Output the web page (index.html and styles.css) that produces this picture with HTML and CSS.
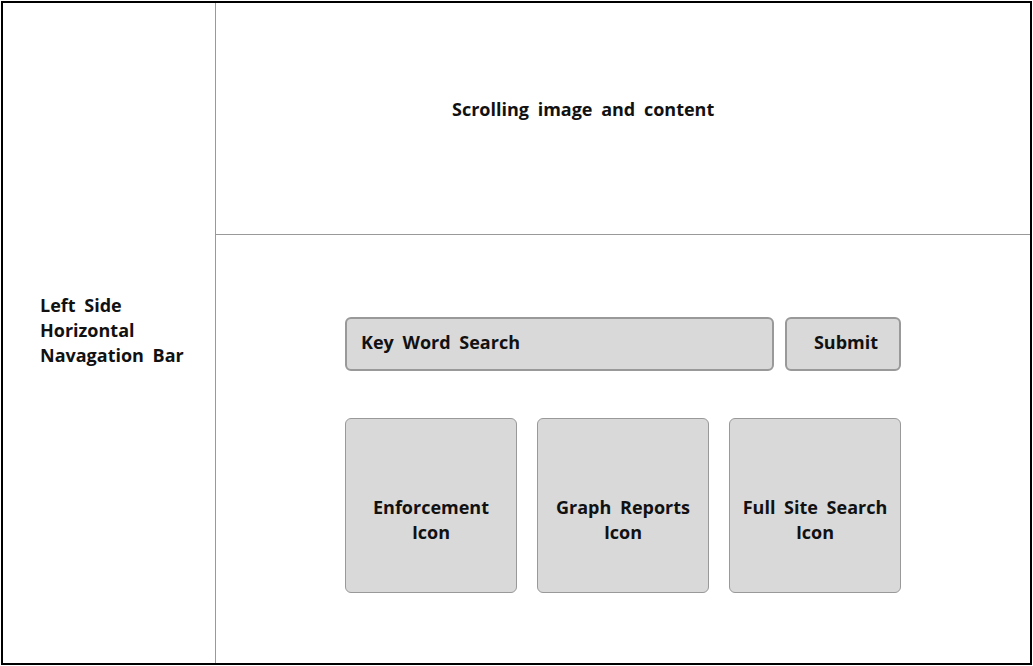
FILE: index.html
```html
<!DOCTYPE html>
<html>
<head>
<meta charset="utf-8">
<link rel="stylesheet" href="styles.css">
</head>
<body>
<div class="frame">
  <aside class="sidenav">
    <div class="sidenav-label">Left Side<br>Horizontal<br>Navagation Bar</div>
  </aside>
  <main class="main">
    <section class="hero">
      <div class="hero-label">Scrolling image and content</div>
    </section>
    <section class="content">
      <div class="search-row">
        <div class="search-box">Key Word Search</div>
        <div class="submit-btn">Submit</div>
      </div>
      <div class="tiles">
        <div class="tile">Enforcement<br>Icon</div>
        <div class="tile">Graph Reports<br>Icon</div>
        <div class="tile">Full Site Search<br>Icon</div>
      </div>
    </section>
  </main>
</div>
</body>
</html>
```

FILE: styles.css
```css
* { box-sizing: border-box; }
html, body {
  margin: 0;
  padding: 0;
  background: #fff;
}
body {
  font-family: "Open Sans", "Noto Sans", sans-serif;
  font-weight: 700;
  font-size: 18px;
  line-height: 25px;
  color: #111;
  word-spacing: 4px;
}
.frame {
  margin: 1px;
  width: 1031px;
  height: 664px;
  border: 2px solid #000;
  display: flex;
}
.sidenav {
  width: 213px;
  flex: none;
  border-right: 1px solid #999;
  display: flex;
  align-items: center;
  padding-left: 37px;
  padding-bottom: 6px;
}
.main {
  flex: 1;
  display: flex;
  flex-direction: column;
}
.hero {
  height: 232px;
  flex: none;
  border-bottom: 1px solid #999;
  padding-top: 94px;
  padding-left: 236px;
}
.content {
  flex: 1;
  padding-top: 82px;
  padding-left: 129px;
}
.search-row {
  display: flex;
  gap: 11px;
}
.search-box {
  width: 429px;
  height: 54px;
  background: #d9d9d9;
  border: 2px solid #999;
  border-radius: 6px;
  display: flex;
  align-items: center;
  padding-left: 14px;
  padding-bottom: 4px;
}
.submit-btn {
  width: 116px;
  height: 54px;
  background: #d9d9d9;
  border: 2px solid #999;
  border-radius: 6px;
  display: flex;
  align-items: center;
  justify-content: center;
  padding-bottom: 4px;
  padding-left: 6px;
}
.tiles {
  margin-top: 47px;
  display: grid;
  grid-template-columns: repeat(3, 172px);
  column-gap: 20px;
}
.tile {
  height: 175px;
  background: #d9d9d9;
  border: 1px solid #999;
  border-radius: 6px;
  display: flex;
  align-items: center;
  justify-content: center;
  text-align: center;
  padding-top: 28px;
}
```
